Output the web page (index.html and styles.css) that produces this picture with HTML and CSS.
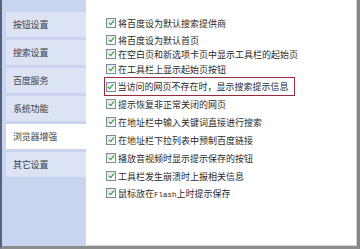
FILE: index.html
```html
<!DOCTYPE html>
<html lang="zh-CN">
<head>
<meta charset="utf-8">
<link rel="stylesheet" href="styles.css">
</head>
<body>
<div class="frame">
  <nav class="sidebar">
    <div class="nav-item">按钮设置</div>
    <div class="nav-item">搜索设置</div>
    <div class="nav-item">百度服务</div>
    <div class="nav-item">系统功能</div>
    <div class="nav-item active">浏览器增强</div>
    <div class="nav-item">其它设置</div>
  </nav>
  <main class="panel">
    <div class="opt first"><span class="cb"></span><span>将百度设为默认搜索提供商</span></div>
    <div class="opt m5"><span class="cb"></span><span>将百度设为默认首页</span></div>
    <div class="opt m2"><span class="cb"></span><span>在空白页和新选项卡页中显示工具栏的起始页</span></div>
    <div class="opt m3"><span class="cb"></span><span>在工具栏上显示起始页按钮</span></div>
    <div class="opt highlight"><span class="cb"></span><span>当访问的网页不存在时，显示搜索提示信息</span></div>
    <div class="opt m2"><span class="cb"></span><span>提示恢复非正常关闭的网页</span></div>
    <div class="opt m6"><span class="cb"></span><span>在地址栏中输入关键词直接进行搜索</span></div>
    <div class="opt m6"><span class="cb"></span><span>在地址栏下拉列表中预制百度链接</span></div>
    <div class="opt m6"><span class="cb"></span><span>播放音视频时显示提示保存的按钮</span></div>
    <div class="opt m6"><span class="cb"></span><span>工具栏发生崩溃时上报相关信息</span></div>
    <div class="opt m5"><span class="cb"></span><span>鼠标放在<span class="mono">Flash</span>上时提示保存</span></div>
  </main>
</div>
</body>
</html>
```

FILE: styles.css
```css
html, body {
  margin: 0;
  padding: 0;
  background: #ffffff;
}

body {
  width: 360px;
  height: 249px;
  overflow: hidden;
  font-family: "Noto Sans CJK SC", "Noto Sans", sans-serif;
}

.frame {
  box-sizing: border-box;
  width: 360px;
  height: 249px;
  display: flex;
  border-left: 2px solid #56627f;
  border-right: 3px solid #858585;
  border-bottom: 3px solid #8c8c8c;
}

.sidebar {
  width: 84px;
  flex: none;
  background: #c9d4ef;
  padding: 12px 0 0 4px;
  box-sizing: border-box;
  display: flex;
  flex-direction: column;
  gap: 3px;
}

.nav-item {
  height: 25px;
  background: #dce3f5;
  display: flex;
  align-items: center;
  padding-left: 7px;
  font-size: 9px;
  color: #3a404a;
  letter-spacing: -0.2px;
}

.nav-item.active {
  background: #ffffff;
}

.panel {
  flex: 1;
  background: #ffffff;
  border-right: 1px solid #d2d2d2;
  border-bottom: 1px solid #d6d6d6;
  padding: 17px 0 0 20px;
  display: flex;
  flex-direction: column;
  align-items: flex-start;
}

.opt {
  height: 12px;
  display: flex;
  align-items: center;
  gap: 2px;
  font-size: 9px;
  color: #2a2a2a;
  white-space: nowrap;
}

.m2 { margin-top: 2px; }
.m3 { margin-top: 3px; }
.m5 { margin-top: 5px; }
.m6 { margin-top: 6px; }

.highlight {
  border: 1.5px solid #9a2b3a;
  padding: 2.5px 5px 2.5px 0.5px;
  margin-left: -2px;
  margin-top: 2px;
}

.cb {
  width: 8px;
  height: 8px;
  flex: none;
  border: 1px solid #7e8a99;
  background: linear-gradient(135deg, #dfe3e8, #ffffff);
  position: relative;
}

.cb::after {
  content: "";
  position: absolute;
  left: 2.5px;
  top: 0px;
  width: 2px;
  height: 5px;
  border: solid #23a02a;
  border-width: 0 1.6px 1.6px 0;
  transform: rotate(40deg);
}

.mono {
  font-family: "Liberation Mono", "DejaVu Sans Mono", monospace;
  font-size: 7.5px;
}
```
